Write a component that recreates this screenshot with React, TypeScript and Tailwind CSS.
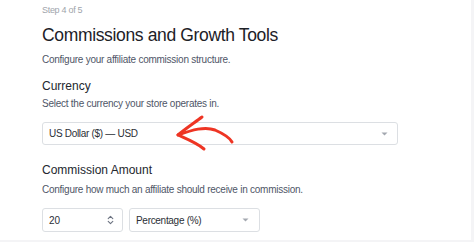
import React from "react";

function Caret() {
  return (
    <svg width="7" height="4" viewBox="0 0 7 4" className="shrink-0">
      <path d="M0.5 0.5 L3.5 3.5 L6.5 0.5 Z" fill="#a3a8b0" />
    </svg>
  );
}

function Spinner() {
  return (
    <svg width="7" height="10" viewBox="0 0 7 10" className="shrink-0">
      <path d="M1.2 3.6 L3.5 1.3 L5.8 3.6" stroke="#6b7280" strokeWidth="1.1" fill="none" strokeLinecap="round" strokeLinejoin="round" />
      <path d="M1.2 6.4 L3.5 8.7 L5.8 6.4" stroke="#6b7280" strokeWidth="1.1" fill="none" strokeLinecap="round" strokeLinejoin="round" />
    </svg>
  );
}

export default function App() {
  return (
    <div className="w-[474px] h-[242px] bg-[#f4f4f6] overflow-hidden" style={{ fontFamily: '"Liberation Sans", Arial, sans-serif' }}>
      <div className="w-[471px] h-[240px] bg-white relative pl-[42px] pt-[4px]">
        <div className="text-[9px] leading-[12px] tracking-[-0.3px] text-[#a0a4ab]">Step 4 of 5</div>
        <h1 className="mt-[8px] text-[17.5px] leading-[22px] tracking-[-0.35px] text-[#1d2127]">Commissions and Growth Tools</h1>
        <p className="mt-[7px] text-[10px] leading-[14px] tracking-[-0.25px] text-[#4f5667]">Configure your affiliate commission structure.</p>
        <h2 className="mt-[11px] text-[12px] leading-[16px] text-[#23272e]">Currency</h2>
        <p className="mt-[3px] text-[10px] leading-[14px] tracking-[-0.25px] text-[#4f5667]">Select the currency your store operates in.</p>
        <div className="mt-[11px] w-[356px] h-[23px] border border-[#dcdfe3] rounded-[3px] flex items-center justify-between pl-[6px] pr-[9px] text-[10px] tracking-[-0.3px] text-[#2b2f36]">
          <span>US Dollar ($) — USD</span>
          <Caret />
        </div>
        <h2 className="mt-[17px] text-[12px] leading-[16px] text-[#23272e]">Commission Amount</h2>
        <p className="mt-[5px] text-[10px] leading-[14px] tracking-[-0.25px] text-[#4f5667]">Configure how much an affiliate should receive in commission.</p>
        <div className="mt-[11px] flex gap-[6px]">
          <div className="w-[81px] h-[24px] border border-[#dcdfe3] rounded-[3px] flex items-center justify-between pl-[6px] pr-[8px] text-[10px] text-[#2b2f36]">
            <span>20</span>
            <Spinner />
          </div>
          <div className="w-[131px] h-[24px] border border-[#dcdfe3] rounded-[3px] flex items-center justify-between pl-[6px] pr-[10px] text-[10px] tracking-[-0.3px] text-[#2b2f36]">
            <span>Percentage (%)</span>
            <Caret />
          </div>
        </div>
        <svg className="absolute left-0 top-0 pointer-events-none" width="474" height="242" viewBox="0 0 474 242">
          <path d="M178 135 C 192 130, 205 126, 215 130 C 224 134, 230 138, 232 142" stroke="#ee3524" strokeWidth="3" fill="none" strokeLinecap="round" />
          <path d="M202 117 C 194 123, 185 129, 178 135 C 187 139, 197 143, 204 149" stroke="#ee3524" strokeWidth="3" fill="none" strokeLinecap="round" strokeLinejoin="round" />
        </svg>
      </div>
    </div>
  );
}
